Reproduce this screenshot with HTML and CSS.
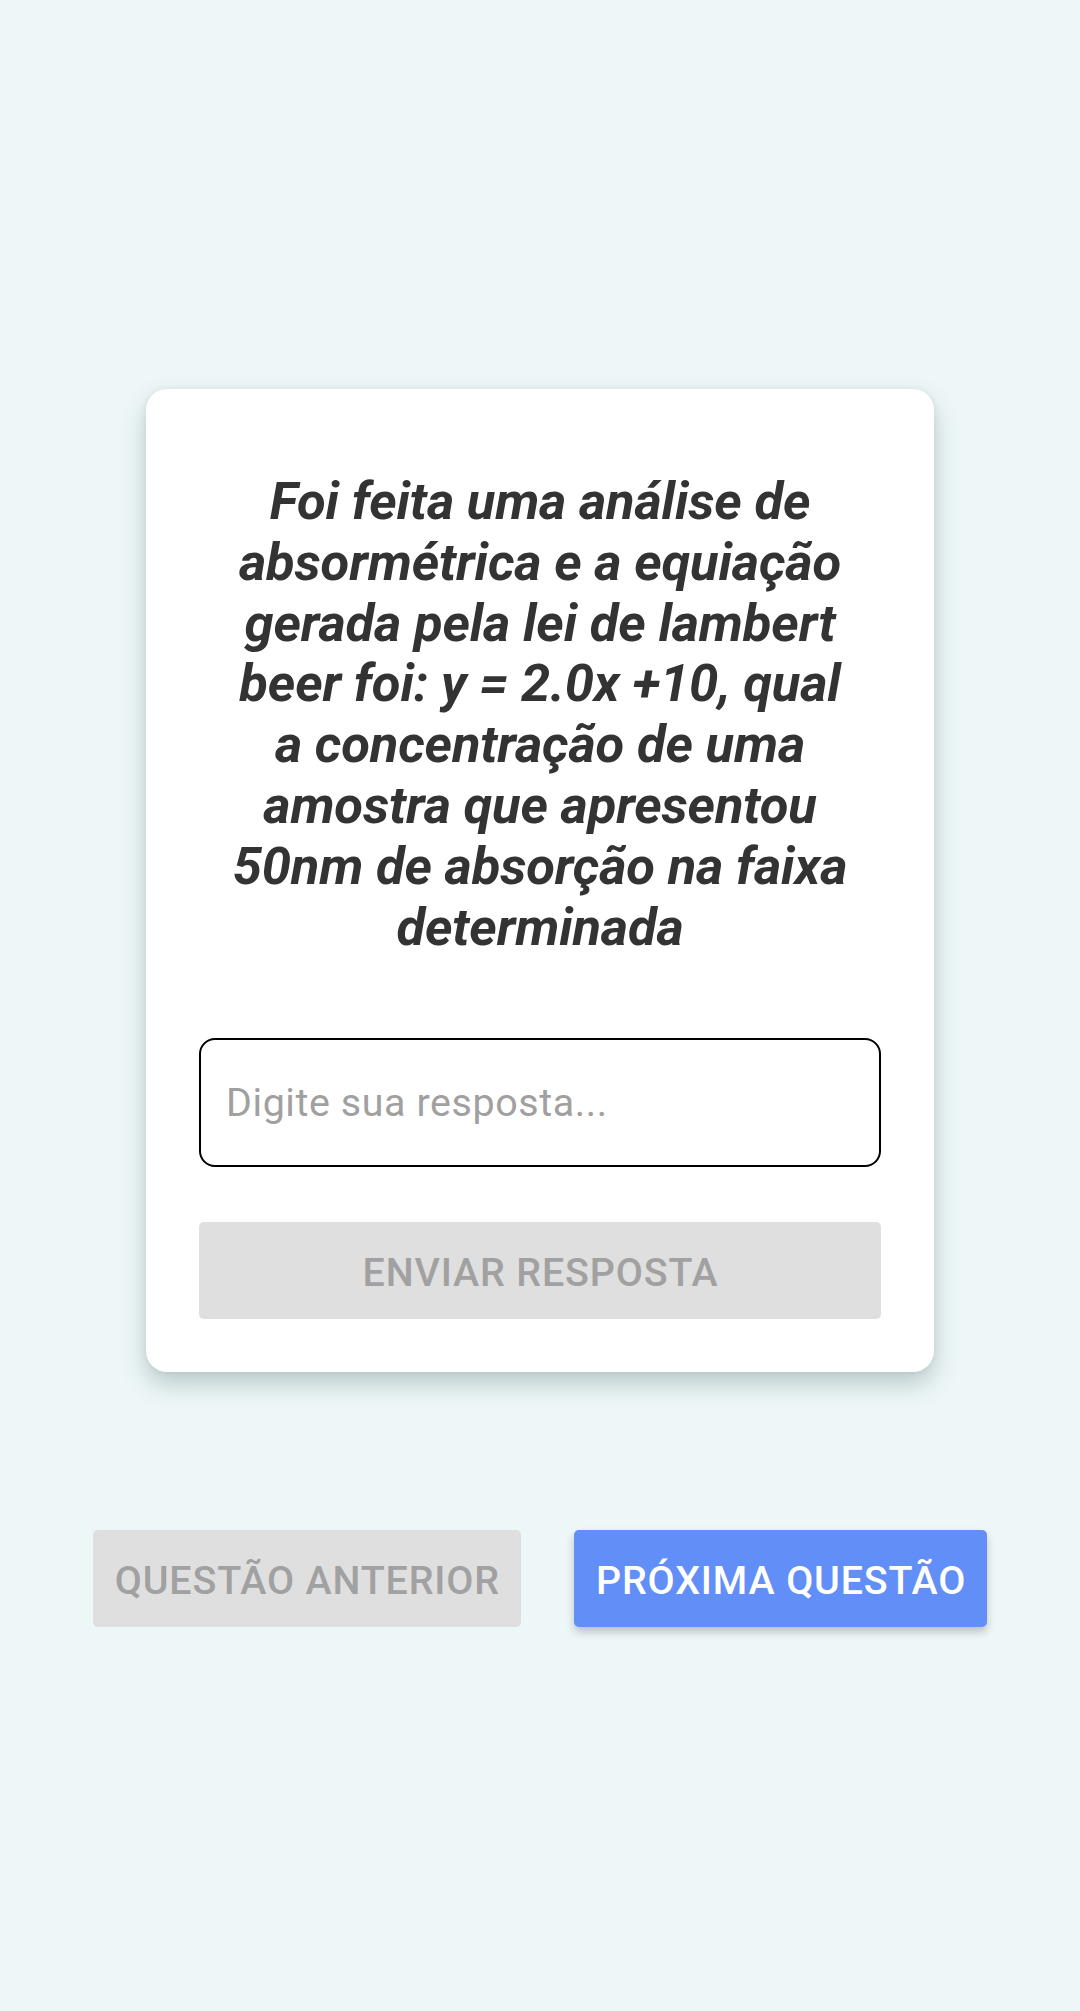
FILE: index.html
```html
<!DOCTYPE html>
<html lang="pt">
<head>
<meta charset="utf-8">
<title>Questão</title>
<link rel="stylesheet" href="styles.css">
</head>
<body>
<main class="screen">
  <section class="card">
    <h1 class="question">Foi feita uma análise de absormétrica e a equiação gerada pela lei de lambert beer foi: y = 2.0x +10, qual a concentração de uma amostra que apresentou 50nm de absorção na faixa determinada</h1>
    <input class="answer" type="text" placeholder="Digite sua resposta...">
    <button class="btn btn-disabled btn-block" type="button">ENVIAR RESPOSTA</button>
  </section>
  <nav class="nav-row">
    <button class="btn btn-disabled" type="button">QUESTÃO ANTERIOR</button>
    <button class="btn btn-primary" type="button">PRÓXIMA QUESTÃO</button>
  </nav>
</main>
</body>
</html>
```

FILE: styles.css
```css
* {
  box-sizing: border-box;
}

html, body {
  margin: 0;
  padding: 0;
  height: 100%;
}

body {
  background: #eef7f8;
  font-family: Roboto, "Noto Sans", "Liberation Sans", sans-serif;
}

.screen {
  min-height: 2011px;
  display: flex;
  flex-direction: column;
  align-items: center;
  justify-content: center;
  padding-top: 5px;
}

.card {
  width: 788px;
  background: #ffffff;
  border-radius: 21px;
  padding: 53px;
  display: flex;
  flex-direction: column;
  box-shadow: 0 12px 24px rgba(40, 70, 70, 0.26), 0 0 6px rgba(40, 70, 70, 0.08);
}

.question {
  margin: 29px 26px 80.6px;
  font-size: 52.5px;
  line-height: 60.8px;
  font-weight: 700;
  font-style: italic;
  color: #333333;
  text-align: center;
  letter-spacing: -0.15px;
}

.answer {
  width: 100%;
  height: 129px;
  border: 2.6px solid #000000;
  border-radius: 16px;
  padding: 0 25px;
  font-family: inherit;
  font-size: 39.4px;
  letter-spacing: 0.6px;
  color: #333333;
  background: #ffffff;
  outline: none;
}

.answer::placeholder {
  color: #a0a0a0;
}

.btn {
  border: none;
  border-radius: 5px;
  height: 97px;
  padding: 5px 21px 0 22px;
  font-family: inherit;
  font-size: 39.4px;
  font-weight: 500;
  letter-spacing: 0.85px;
}

.btn-block {
  width: 100%;
  margin-top: 55px;
}

.btn-disabled {
  background: #dfdfdf;
  color: #a1a1a1;
}

.btn-primary {
  background: #628ef7;
  color: #ffffff;
  box-shadow: 0 5px 8px rgba(0, 0, 0, 0.22);
}

.nav-row {
  display: flex;
  gap: 53px;
  margin-top: 158px;
}
```
